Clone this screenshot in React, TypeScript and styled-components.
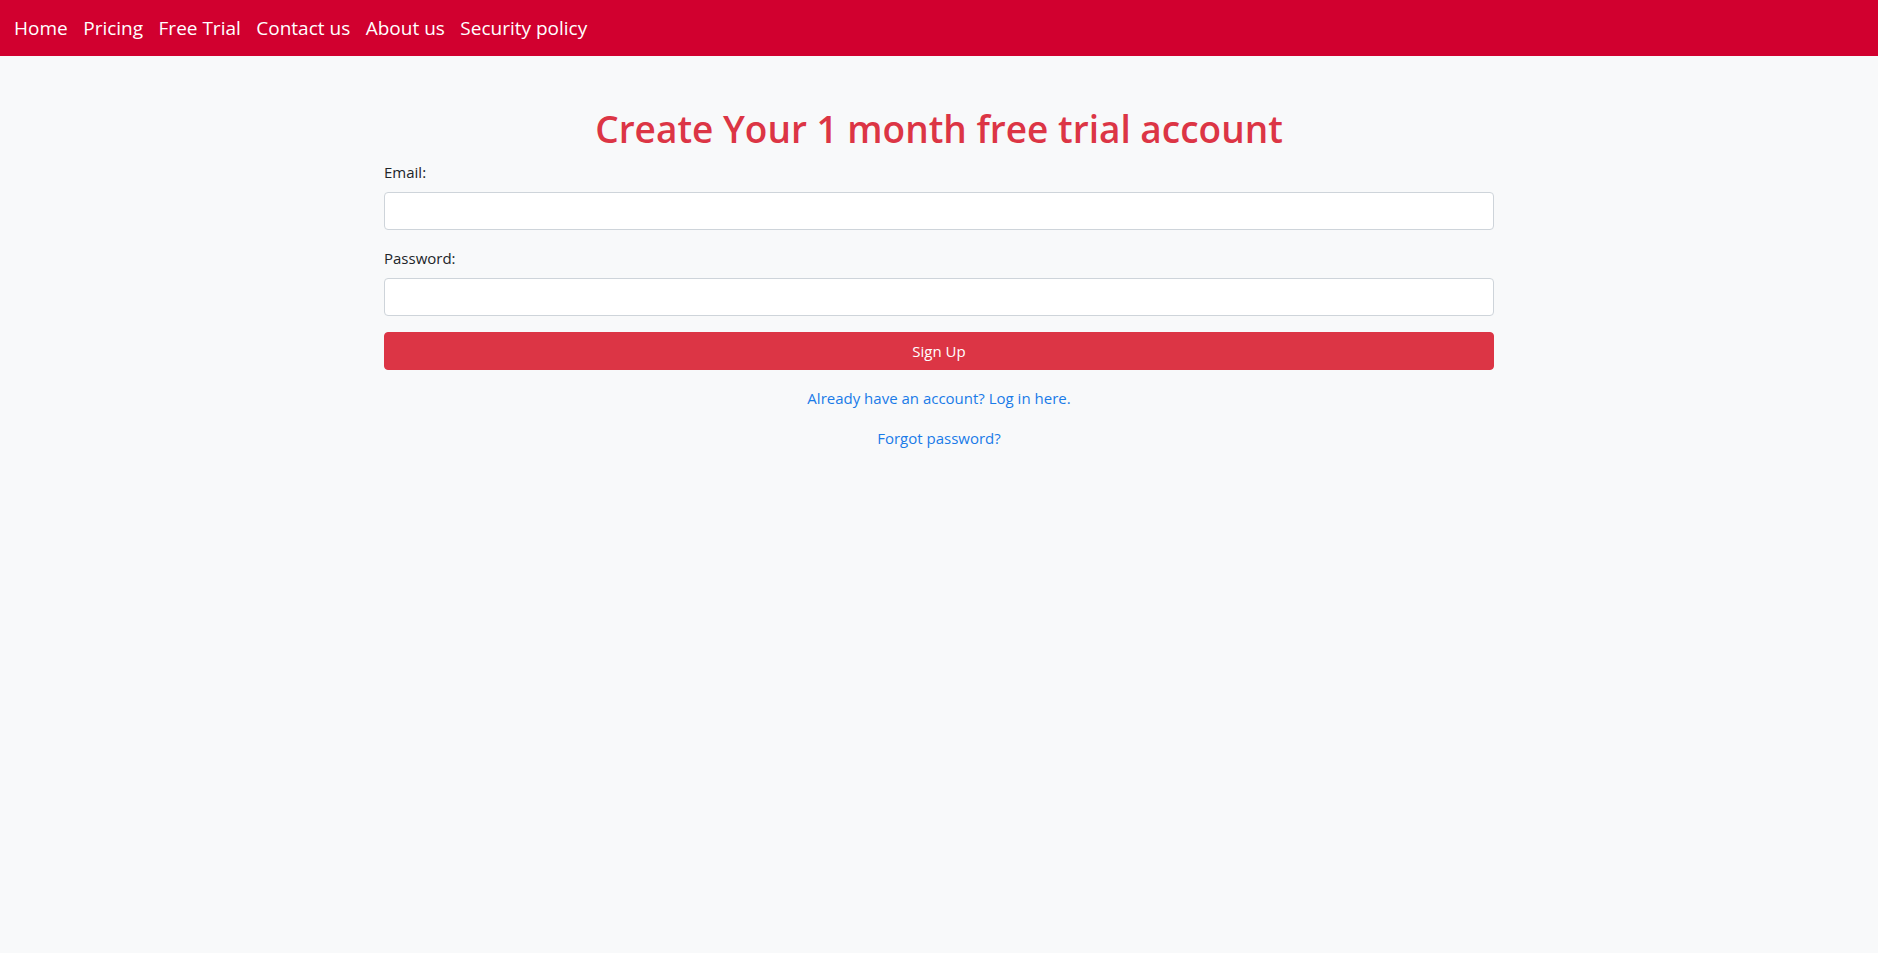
import React from "react";
import styled, { createGlobalStyle } from "styled-components";

const GlobalStyle = createGlobalStyle`
  html, body {
    margin: 0;
    padding: 0;
    background: #f8f9fa;
    font-family: "Open Sans", "Noto Sans", sans-serif;
    color: #212529;
  }
  #root { min-height: 953px; background: #f8f9fa; }
  * { box-sizing: border-box; }
`;

const NavBar = styled.nav`
  height: 56px;
  background: #d1002f;
  display: flex;
  align-items: center;
  padding: 0 14px;
  gap: 15.5px;
`;

const NavLink = styled.a`
  color: #ffffff;
  font-size: 19px;
  text-decoration: none;
  line-height: 1;
  padding-top: 1px;
  cursor: pointer;
`;

const Container = styled.main`
  width: 1140px;
  margin: 48px auto 0;
  padding: 0 15px;
`;

const Title = styled.h1`
  margin: 0 0 8px;
  padding-top: 1px;
  height: 48px;
  text-align: center;
  color: #dc3545;
  font-size: 37px;
  font-weight: 600;
  line-height: 48px;
`;

const FormGroup = styled.div`
  margin-bottom: 16px;
`;

const Label = styled.label`
  display: block;
  font-size: 15px;
  line-height: 24px;
  margin-bottom: 8px;
  color: #212529;
`;

const Input = styled.input`
  display: block;
  width: 100%;
  height: 38px;
  border: 1px solid #ced4da;
  border-radius: 4px;
  background: #fff;
  padding: 6px 12px;
  font-size: 16px;
  font-family: inherit;
  outline: none;
`;

const SubmitButton = styled.button`
  display: block;
  width: 100%;
  height: 38px;
  border: 1px solid #dc3545;
  border-radius: 4px;
  background: #dc3545;
  color: #fff;
  font-size: 15px;
  font-family: inherit;
  line-height: 24px;
  cursor: pointer;
`;

const LinkRow = styled.p<{ $first?: boolean }>`
  margin: ${(p) => (p.$first ? "16px" : "0")} 0 16px;
  text-align: center;
  font-size: 15px;
  line-height: 24px;
`;

const TextLink = styled.a`
  color: #1a7be8;
  text-decoration: none;
  cursor: pointer;
`;

const navItems = ["Home", "Pricing", "Free Trial", "Contact us", "About us", "Security policy"];

export default function App() {
  return (
    <>
      <GlobalStyle />
      <NavBar>
        {navItems.map((item) => (
          <NavLink key={item}>{item}</NavLink>
        ))}
      </NavBar>
      <Container>
        <Title>Create Your 1 month free trial account</Title>
        <form onSubmit={(e) => e.preventDefault()}>
          <FormGroup>
            <Label htmlFor="email">Email:</Label>
            <Input id="email" type="email" />
          </FormGroup>
          <FormGroup>
            <Label htmlFor="password">Password:</Label>
            <Input id="password" type="password" />
          </FormGroup>
          <SubmitButton type="submit">Sign Up</SubmitButton>
        </form>
        <LinkRow $first>
          <TextLink>Already have an account? Log in here.</TextLink>
        </LinkRow>
        <LinkRow>
          <TextLink>Forgot password?</TextLink>
        </LinkRow>
      </Container>
    </>
  );
}
